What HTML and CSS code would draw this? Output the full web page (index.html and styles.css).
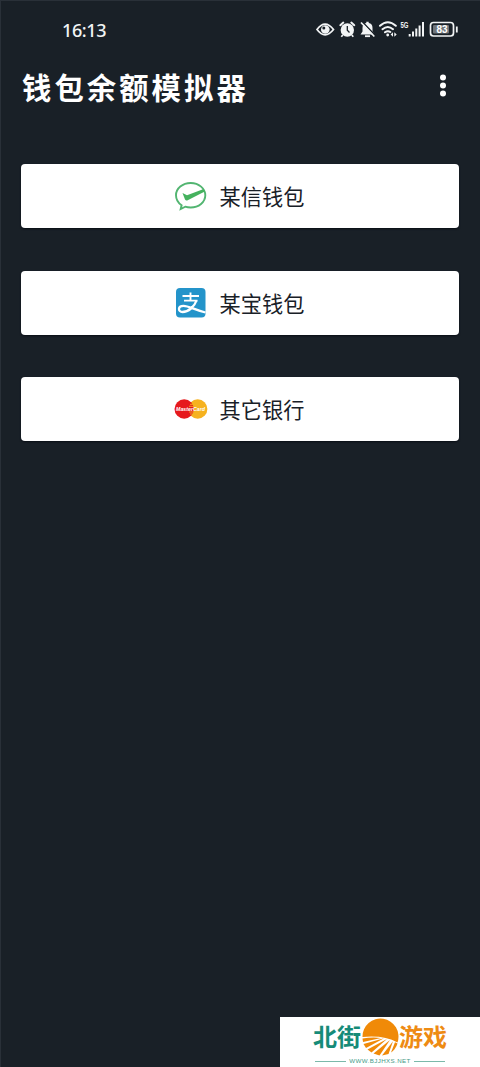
FILE: index.html
```html
<!DOCTYPE html>
<html lang="zh-CN">
<head>
<meta charset="utf-8">
<title>钱包余额模拟器</title>
<link rel="stylesheet" href="styles.css">
</head>
<body>
<div class="screen">
  <div class="status">
    <span class="time">16:13</span>
    <svg class="status-icons" width="146" height="22" viewBox="314 18 146 22" fill="none" stroke="#f2f4f5" stroke-width="1.7">
      <path d="M317 29.500Q325 18.800 333.500 29.500Q325 40.200 317 29.500Z"/>
      <circle cx="325.300" cy="29.500" r="4.300" fill="#f2f4f5" stroke="none"/>
      <circle cx="323.800" cy="28" r="1.500" fill="#192027" stroke="none"/>
      <circle cx="347.300" cy="30" r="6.700" fill="#f2f4f5" stroke="none"/>
      <path d="M340.300 25.200L343.300 22.600M354.300 25.200L351.300 22.600" stroke-width="2" stroke-linecap="round"/>
      <path d="M342.800 35L341.300 36.800M351.800 35L353.300 36.800"/>
      <path d="M347.300 26V30.300L349.500 32.500" stroke="#192027" stroke-width="1.300"/>
      <path d="M360.500 34.500L362.500 31.500V28Q362.500 23.500 366.300 23V21.800H368.700V23Q372.500 23.500 372.500 28V31.500L374.500 34.500Z" fill="#f2f4f5" stroke="none"/>
      <path d="M365 36.200H370" stroke-width="1.800"/>
      <path d="M362.300 21.800L375.300 35.500" stroke="#192027" stroke-width="1.500"/>
      <path d="M361 22.500L374.300 36.500" stroke-width="1.700"/>
      <g stroke-width="2" stroke-linecap="round">
        <path d="M380 25.800Q387.800 18.800 395.800 25.800M382.500 29.200Q387.800 24.700 393 29.200M385 32.300Q387.800 30.300 390.300 32"/>
      </g>
      <circle cx="387.700" cy="35" r="1.400" fill="#f2f4f5" stroke="none"/>
      <path d="M393 32.300L390.600 34.500L393 36.700ZM394.300 32.300L396.700 34.500L394.300 36.700Z" fill="#f2f4f5" stroke="none"/>
      <text class="network" x="400.500" y="28" textLength="8" lengthAdjust="spacingAndGlyphs">5G</text>
      <path d="M409.700 34V36.500M413 31.500V36.500M416.300 28.500V36.500M419.600 25.500V36.500M423 22V36.500" stroke-width="2"/>
      <rect x="430.500" y="22.500" width="23" height="13.500" rx="3"/>
      <rect x="433" y="25" width="16" height="8.500" rx="1" fill="#70757a" stroke="none"/>
      <path d="M456.800 26.500V32.500" stroke-width="1.800"/>
      <text class="battery" x="442" y="33.200" text-anchor="middle">83</text>
    </svg>
  </div>
  <header class="bar">
    <h1 class="title">钱包余额模拟器</h1>
    <svg class="more" width="8" height="24" viewBox="0 0 8 24" fill="#fff"><circle cx="4" cy="3.500" r="3"/><circle cx="4" cy="11.500" r="3"/><circle cx="4" cy="19.500" r="3"/></svg>
  </header>
  <main class="wallets">
    <button class="wallet">
      <svg class="logo" width="34" height="32" viewBox="0 0 34 32">
        <path d="M7.600 25.300Q2 21.500 2 15.300C2 8.500 8.500 3 16.700 3S31.300 8.500 31.300 15.300S24.800 27.500 16.700 27.500Q13.700 27.500 11.300 26.700L6.700 29Z" fill="none" stroke="#52b571" stroke-width="1.900"/>
        <path d="M8.500 13L13 15.300L29 9.200L31.300 11.200L13.700 20.300Q12 21.200 11 19.500Z" fill="#45b25e"/>
      </svg>
      <span class="label">某信钱包</span>
    </button>
    <button class="wallet">
      <svg class="logo" width="34" height="32" viewBox="0 0 34 32">
        <rect x="2" y="1" width="29.500" height="29.500" rx="4" fill="#2494ca"/>
        <g fill="none" stroke="#fff">
          <path d="M8.500 9H25M10 13.600H23.500M16.500 5.500V13" stroke-width="1.900"/>
          <path d="M22.500 13.500C20.500 19.500 14.500 25 8.500 25C3.800 25 3.500 18.800 9.500 18.800C14.500 18.800 20 22.500 31.500 25.500" stroke-width="2.300"/>
        </g>
      </svg>
      <span class="label">某宝钱包</span>
    </button>
    <button class="wallet">
      <svg class="logo" width="34" height="32" viewBox="0 0 34 32">
        <circle cx="23.700" cy="16" r="9.700" fill="#f6b21f"/>
        <circle cx="10.200" cy="16" r="9.700" fill="#e6191d"/>
        <path d="M16 11.300H20M15 13.300H20.500M15 19H20.500M16 21H20" stroke="#f6b21f" stroke-width=".9"/>
        <text class="card-name" x="2" y="18.300" textLength="29" lengthAdjust="spacingAndGlyphs">MasterCard</text>
      </svg>
      <span class="label">其它银行</span>
    </button>
  </main>
  <footer class="brand">
    <div class="brand-row">
      <span class="brand-green">北街</span>
      <svg class="sun" width="38" height="38" viewBox="0 0 38 38">
        <g fill="#f08a08" transform="translate(1 .5)">
          <path d="M.5 18.500A18 18 0 1 1 35.500 24Q22 16.500 .5 18.500Z"/>
          <path d="M.5 20Q10 18.500 19 19.500L1 23.500Z"/>
          <path d="M1.500 25.500L22 19.800L4 29.500Z"/>
          <path d="M5.500 31L25 20.500L9.500 34Z"/>
          <path d="M11.500 35L28 21.500L17.500 37Z"/>
          <path d="M20 37L31 22.800L26.500 35.500Z"/>
          <path d="M29 34L33 23.800L35.500 25Q33.500 31 29 34Z"/>
        </g>
      </svg>
      <span class="brand-orange">游戏</span>
    </div>
    <div class="brand-url"><i class="rule"></i><span class="url">WWW.BJJHXS.NET</span><i class="rule"></i></div>
  </footer>
</div>
</body>
</html>
```
FILE: styles.css
```css
* { box-sizing: border-box; }
body { margin: 0; font-family: "Noto Sans", "Noto Sans CJK SC", sans-serif; }
.screen {
  display: flex;
  flex-direction: column;
  width: 480px;
  height: 1067px;
  background: #192027;
  box-shadow: inset 1px 1px #293038;
  overflow: hidden;
}
.status {
  display: flex;
  justify-content: space-between;
  align-items: flex-start;
  height: 58px;
  padding: 18px 20px 0 62px;
}
.time { color: #f2f4f5; font: 500 18px/24px "Noto Sans", sans-serif; letter-spacing: -.4px; }
.status-icons { flex: none; }
.network { font: bold 9px "Liberation Sans", sans-serif; fill: #f2f4f5; stroke: none; }
.battery { font: bold 10px "Liberation Sans", sans-serif; fill: #fff; stroke: none; }
.bar {
  display: flex;
  justify-content: space-between;
  align-items: center;
  height: 56px;
  padding: 0 33px 0 22px;
}
.title {
  margin: 0;
  color: #fff;
  font: bold 29.300px/43px "Noto Sans CJK SC", sans-serif;
  letter-spacing: 3.100px;
}
.wallets {
  display: flex;
  flex-direction: column;
  gap: 42.500px;
  padding: 50px 21px 0;
}
.wallet {
  display: flex;
  align-items: center;
  justify-content: center;
  gap: 12px;
  width: 438px;
  height: 64px;
  padding: 0 2px 0 0;
  border: 0;
  border-radius: 4px;
  background: #fff;
  box-shadow: 0 1px 2px #090e15;
}
.logo { flex: none; }
.label { color: #192027; font: 21.200px/32px "Noto Sans CJK SC", sans-serif; }
.brand {
  width: 200px;
  height: 50px;
  margin: auto 0 0 auto;
  padding-top: 1px;
  background: #fff;
}
.brand-row {
  display: flex;
  align-items: center;
  justify-content: center;
  height: 38px;
  font: bold 24px/38px "Noto Sans CJK SC", sans-serif;
}
.brand-green { color: #168b78; }
.brand-orange { color: #ee8b13; }
.brand-green, .brand-orange { padding-bottom: 2px; line-height: 36px; }
.brand-url { display: flex; align-items: center; justify-content: center; gap: 3px; height: 10px; }
.rule { width: 31px; height: 1px; background: #7bb9aa; }
.url { color: #459a87; font: 6.200px/10px "Liberation Sans", sans-serif; letter-spacing: .4px; }
.card-name { font: italic bold 6.200px "Liberation Sans", sans-serif; fill: #fff; }
```
